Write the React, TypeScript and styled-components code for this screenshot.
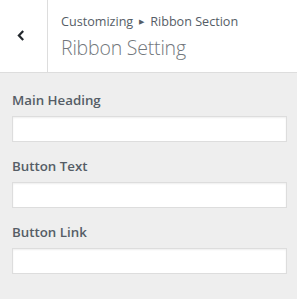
import React from "react";
import styled, { createGlobalStyle } from "styled-components";

const GlobalStyle = createGlobalStyle`
  html, body {
    margin: 0;
    padding: 0;
    background: #eeeeee;
  }
  * {
    box-sizing: border-box;
  }
`;

const Panel = styled.div`
  width: 297px;
  height: 299px;
  background: #eeeeee;
  font-family: "Open Sans", "Noto Sans", sans-serif;
  color: #555d66;
`;

const Header = styled.div`
  display: flex;
  height: 73px;
  background: #ffffff;
  border-bottom: 1px solid #dddddd;
`;

const BackButton = styled.button`
  width: 48px;
  flex: none;
  display: flex;
  align-items: center;
  justify-content: center;
  background: #ffffff;
  border: none;
  border-right: 1px solid #dddddd;
  padding: 0 5px 1px 0;
  cursor: pointer;
  color: #23282d;
`;

const Titles = styled.div`
  display: flex;
  flex-direction: column;
  padding: 12px 0 0 13px;
`;

const Crumbs = styled.span`
  font-size: 12.6px;
  line-height: 19px;
  color: #555d66;
`;

const Arrow = styled.span`
  font-size: 7px;
  margin: 0 6px;
  vertical-align: 2px;
`;

const Title = styled.h3`
  margin: 4px 0 0 0;
  font-size: 19.5px;
  line-height: 26px;
  font-weight: 300;
  color: #72777c;
  letter-spacing: -0.2px;
`;

const Body = styled.div`
  display: flex;
  flex-direction: column;
  padding: 17px 11px 0 12px;
  gap: 14px;
`;

const Field = styled.label`
  display: flex;
  flex-direction: column;
  gap: 6px;
`;

const Label = styled.span`
  font-size: 13.3px;
  line-height: 20px;
  font-weight: 600;
  color: #555d66;
`;

const Input = styled.input`
  width: 275px;
  height: 26px;
  border: 1px solid #dddddd;
  background: #ffffff;
  box-shadow: inset 0 1px 2px rgba(0, 0, 0, 0.07);
  outline: none;
`;

const fields = ["Main Heading", "Button Text", "Button Link"];

export default function App() {
  return (
    <>
      <GlobalStyle />
      <Panel>
        <Header>
          <BackButton aria-label="Back">
            <svg width="8" height="11" viewBox="0 0 8 11">
              <path
                d="M6.2 1 L1.9 5.5 L6.2 10"
                fill="none"
                stroke="currentColor"
                strokeWidth="2.2"
              />
            </svg>
          </BackButton>
          <Titles>
            <Crumbs>
              Customizing<Arrow>▶</Arrow>Ribbon Section
            </Crumbs>
            <Title>Ribbon Setting</Title>
          </Titles>
        </Header>
        <Body>
          {fields.map((name) => (
            <Field key={name}>
              <Label>{name}</Label>
              <Input type="text" />
            </Field>
          ))}
        </Body>
      </Panel>
    </>
  );
}
